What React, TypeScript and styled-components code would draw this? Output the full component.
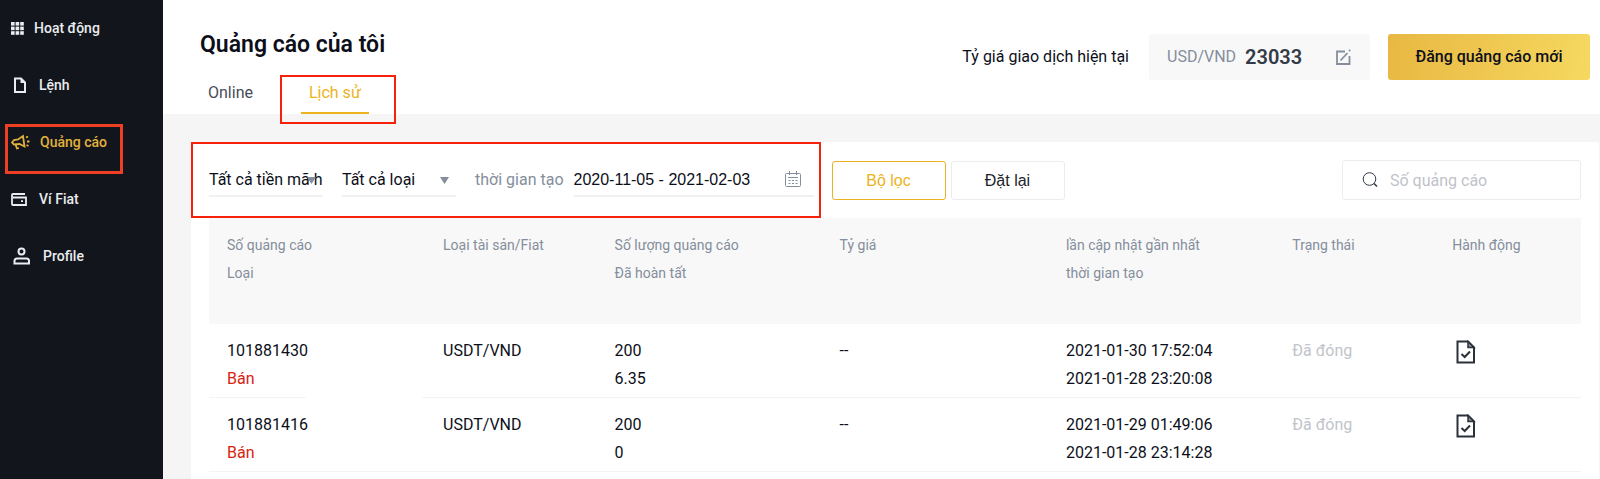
import React from "react";
import styled, { createGlobalStyle } from "styled-components";

const ink = "#12161c";
const muted = "#848e9c";
const gold = "#ecb320";
const mark = "#f7200c";

const GlobalStyle = createGlobalStyle`
  * { box-sizing: border-box; }
  body { margin: 0; background: #f5f5f6; color: #0c0f1a; font-family: Roboto, "Noto Sans", sans-serif; font-size: 16px; line-height: 28px; }
  button, input, select { font: inherit; color: inherit; margin: 0; }
  a { color: inherit; text-decoration: none; }
`;

const Page = styled.div`
  display: grid;
  grid-template-columns: 163px minmax(0, 1fr);
  min-height: 100vh;
`;

const Sidebar = styled.nav`
  background: ${ink};
  padding-top: 10px;
  display: flex;
  flex-direction: column;
  gap: 21px;
`;

const NavLink = styled.a<{ $active?: boolean; $gap: number }>`
  display: flex;
  align-items: center;
  gap: ${(p) => p.$gap}px;
  height: 36px;
  padding-left: 11px;
  font-size: 14px;
  font-weight: 500;
  color: ${(p) => (p.$active ? "#e0b13c" : "#eaecef")};
  position: relative;
  svg { flex: none; }
`;

const NavOutline = styled.span`
  position: absolute;
  left: 5px;
  top: 0;
  width: 118px;
  height: 50px;
  border: 3px solid #ee3e23;
`;

const Main = styled.main`
  min-width: 0;
  display: flex;
  flex-direction: column;
`;

const Header = styled.header`
  background: #fff;
  height: 114px;
  display: flex;
  justify-content: space-between;
  padding: 28px 10px 0 37px;
`;

const Title = styled.h1`
  margin: 0;
  padding-top: 1px;
  font-size: 23px;
  line-height: 32px;
  font-weight: 600;
`;

const Tabs = styled.div`
  display: flex;
  gap: 40px;
  margin-top: 13px;
`;

const Tab = styled.button<{ $active?: boolean }>`
  position: relative;
  height: 40px;
  padding: 0 8px;
  border: 0;
  border-bottom: 2px solid ${(p) => (p.$active ? gold : "transparent")};
  background: none;
  color: ${(p) => (p.$active ? gold : "#474d57")};
`;

const TabOutline = styled.span`
  position: absolute;
  left: -21px;
  top: 1px;
  width: 116px;
  height: 49px;
  border: 2px solid ${mark};
`;

const HeaderRight = styled.div`
  display: flex;
  align-items: center;
  height: 46px;
  margin-top: 6px;
`;

const RateBox = styled.div`
  display: flex;
  align-items: center;
  width: 221px;
  height: 46px;
  margin: 0 18px 0 20px;
  padding: 0 18px;
  border-radius: 3px;
  background: #f8f8f9;
  color: ${muted};
`;

const Rate = styled.strong`
  margin-left: 9px;
  font-size: 20px;
  font-weight: 600;
  color: #333b47;
`;

const IconButton = styled.button`
  display: flex;
  padding: 0;
  border: 0;
  background: none;
  cursor: pointer;
`;

const EditButton = styled(IconButton)`
  margin-left: auto;
`;

const PostButton = styled.button`
  width: 202px;
  height: 46px;
  padding: 0;
  border: 0;
  border-radius: 3px;
  background: linear-gradient(100deg, #e8b842, #f6d860);
  font-weight: 500;
`;

const Card = styled.section`
  flex: 1;
  margin: 28px 1px 0 28px;
  padding: 0 18px;
  background: #fff;
`;

const Filters = styled.form`
  position: relative;
  display: flex;
  align-items: center;
  height: 76px;
`;

const FilterOutline = styled.span`
  position: absolute;
  left: -18px;
  top: 0;
  width: 630px;
  height: 76px;
  border: 2px solid ${mark};
  pointer-events: none;
`;

const SelectWrap = styled.label`
  position: relative;
  width: 114px;
  height: 34px;
  margin-right: 19px;
  border-bottom: 2px solid #f0f1f2;
  svg { position: absolute; right: 7px; top: 14px; pointer-events: none; }
`;

const Select = styled.select`
  width: 100%;
  height: 34px;
  padding: 0;
  border: 0;
  background: none;
  appearance: none;
  overflow: hidden;
  text-overflow: clip;
`;

const DateField = styled.label`
  display: flex;
  align-items: center;
  color: ${muted};
`;

const DateBox = styled.span`
  display: flex;
  align-items: center;
  justify-content: space-between;
  width: 240px;
  height: 34px;
  margin-left: 10px;
  padding-right: 13px;
  border-bottom: 2px solid #f0f1f2;
`;

const DateInput = styled.input`
  width: 200px;
  padding: 2px 0 0;
  border: 0;
  background: none;
  font-family: "Liberation Sans", sans-serif;
  color: #0c0f1a;
`;

const FilterButton = styled.button<{ $primary?: boolean }>`
  width: 114px;
  height: 39px;
  padding: 2px 0 0;
  margin-left: ${(p) => (p.$primary ? 18 : 5)}px;
  border: 1px solid ${(p) => (p.$primary ? gold : "#eaecef")};
  border-radius: 3px;
  background: #fff;
  color: ${(p) => (p.$primary ? gold : "#1e2329")};
  font-family: "Liberation Sans", sans-serif;
`;

const Search = styled.label`
  display: flex;
  align-items: center;
  gap: 12px;
  width: 239px;
  height: 40px;
  margin-left: auto;
  padding: 0 19px;
  border: 1px solid #eaecef;
  border-radius: 3px;
  svg { flex: none; }
  input { width: 100%; min-width: 0; padding: 2px 0 0; border: 0; outline: 0; background: none; }
  input::placeholder { color: #bfc3c9; opacity: 1; }
`;

const Table = styled.table`
  width: 100%;
  table-layout: fixed;
  border-collapse: collapse;
`;

const HeadCell = styled.th`
  height: 106px;
  padding: 13px 0 0 18px;
  background: #f8f8f8;
  color: ${muted};
  font-size: 14px;
  font-weight: 400;
  text-align: left;
  vertical-align: top;
`;

const Cell = styled.td<{ $tone?: string; $line?: string }>`
  height: 74px;
  padding: 13px 0 0 18px;
  color: ${(p) => p.$tone || "inherit"};
  background: ${(p) => p.$line || "linear-gradient(#f2f3f4, #f2f3f4)"} bottom left / 100% 1px no-repeat;
  vertical-align: top;
`;

const ActionCell = styled(Cell)`
  padding: 16px 0 0 22px;
`;

const Line = styled.div<{ $tone?: string }>`
  color: ${(p) => p.$tone || "inherit"};
`;

const Col = styled.col<{ $w: number }>`
  width: ${(p) => p.$w}%;
`;

const GridIcon = () => (
  <svg width="13" height="13" viewBox="0 0 13 13" fill="currentColor">
    {[0, 4.6, 9.2].map((y) => [0, 4.6, 9.2].map((x) => <rect key={`${x}-${y}`} x={x} y={y} width="3.600" height="3.600" />))}
  </svg>
);

const FileIcon = () => (
  <svg width="18" height="16" viewBox="0 0 18 16" fill="none" stroke="currentColor" strokeWidth="2">
    <path d="M4 1.500h6l4 4V15H4z" />
    <path d="M9.500 1.500v4.500H14z" fill="currentColor" stroke="none" />
  </svg>
);

const HornIcon = () => (
  <svg width="19" height="16" viewBox="0 0 19 16" fill="none" stroke="currentColor" strokeWidth="1.800">
    <path d="M1 8.500l2-2.500 4-.5L12 2l1.500 10.500-5-2.500L3 10.500zM4.500 10.500l1.500 4 2-.5M15 3.500l2-1M16 7.500h2.500M15.500 11l2 1" />
  </svg>
);

const WalletIcon = () => (
  <svg width="16" height="13" viewBox="0 0 16 13" fill="none" stroke="currentColor" strokeWidth="1.800">
    <path d="M2 4.500h13v7.500H2a1 1 0 0 1-1-1V2a1 1 0 0 1 1-1h12M1 3.500l1 1" />
    <path d="M10 8.200h2" />
  </svg>
);

const UserIcon = () => (
  <svg width="21" height="18" viewBox="0 0 21 18" fill="none" stroke="currentColor" strokeWidth="2">
    <circle cx="10.500" cy="4.500" r="3" />
    <path d="M3.500 16.500v-2.500c0-1.500 1-2.500 2.500-2.500h9.500c1.500 0 2.500 1 2.500 2.500v2.500z" />
  </svg>
);

const EditIcon = () => (
  <svg width="17" height="18" viewBox="0 0 17 18" fill="none" stroke={muted} strokeWidth="1.800">
    <path d="M10 3.500H2v12.500h12.500V8M5.500 12.500l7-7.500M14 3l1.200-1.200" />
  </svg>
);

const Caret = () => (
  <svg width="9" height="7" viewBox="0 0 9 7" fill={muted}><path d="M0 0h9L4.500 7z" /></svg>
);

const CalendarIcon = () => (
  <svg width="16" height="17" viewBox="0 0 16 17" fill="none" stroke={muted}>
    <path d="M1.500 2.500h13a1 1 0 0 1 1 1v11a1 1 0 0 1-1 1h-13a1 1 0 0 1-1-1v-11a1 1 0 0 1 1-1zM4.500 0v4M11.500 0v4M3 6.500h10" />
    <path d="M3.500 9.500h9.500M3.500 12.500h9.500" strokeDasharray="2 1.500" />
  </svg>
);

const SearchIcon = () => (
  <svg width="16" height="16" viewBox="0 0 16 16" fill="none" stroke="#333b47">
    <circle cx="7.500" cy="7" r="6.300" /><path d="M12 11.500l3 3" strokeWidth="1.600" />
  </svg>
);

const DetailIcon = () => (
  <svg width="20" height="24" viewBox="0 0 20 24" fill="none" stroke="#2b3139" strokeWidth="2">
    <path d="M1.500 1.500h10.500l6 6v15H1.500z" />
    <path d="M12 1.500v6h6z" fill="#8b9098" strokeWidth="1.500" />
    <path d="M5.500 14l3.200 3 5.300-5.500" />
  </svg>
);

const nav = [
  { label: "Hoạt động", icon: <GridIcon />, gap: 10 },
  { label: "Lệnh", icon: <FileIcon />, gap: 10 },
  { label: "Quảng cáo", icon: <HornIcon />, gap: 10, active: true },
  { label: "Ví Fiat", icon: <WalletIcon />, gap: 12 },
  { label: "Profile", icon: <UserIcon />, gap: 11 },
];

const widths = [15.75, 12.5, 16.4, 16.5, 16.5, 11.65, 10.7];

const heads = [
  ["Số quảng cáo", "Loại"],
  ["Loại tài sản/Fiat"],
  ["Số lượng quảng cáo", "Đã hoàn tất"],
  ["Tỷ giá"],
  ["lần cập nhật gần nhất", "thời gian tạo"],
  ["Trạng thái"],
  ["Hành động"],
];

const ads = [
  { id: "101881430", done: "6.35", updated: "2021-01-30 17:52:04", created: "2021-01-28 23:20:08",
    line: "linear-gradient(90deg, #f2f3f4 97px, transparent 97px calc(100% - 3px), #f2f3f4 0)" },
  { id: "101881416", done: "0", updated: "2021-01-29 01:49:06", created: "2021-01-28 23:14:28" },
];

export default function App() {
  return (
    <Page>
      <GlobalStyle />
      <Sidebar>
        {nav.map((n) => (
          <NavLink key={n.label} href="#" $active={n.active} $gap={n.gap}>
            {n.icon}
            {n.label}
            {n.active && <NavOutline />}
          </NavLink>
        ))}
      </Sidebar>
      <Main>
        <Header>
          <div>
            <Title>Quảng cáo của tôi</Title>
            <Tabs>
              <Tab>Online</Tab>
              <Tab $active>Lịch sử<TabOutline /></Tab>
            </Tabs>
          </div>
          <HeaderRight>
            <span>Tỷ giá giao dịch hiện tại</span>
            <RateBox>
              USD/VND<Rate>23033</Rate>
              <EditButton aria-label="Sửa tỷ giá"><EditIcon /></EditButton>
            </RateBox>
            <PostButton>Đăng quảng cáo mới</PostButton>
          </HeaderRight>
        </Header>
        <Card>
          <Filters onSubmit={(e) => e.preventDefault()}>
            <SelectWrap>
              <Select aria-label="Tiền mã hóa"><option>Tất cả tiền mã hóa</option></Select>
              <Caret />
            </SelectWrap>
            <SelectWrap>
              <Select aria-label="Loại"><option>Tất cả loại</option></Select>
              <Caret />
            </SelectWrap>
            <DateField>
              thời gian tạo
              <DateBox>
                <DateInput defaultValue="2020-11-05 - 2021-02-03" />
                <CalendarIcon />
              </DateBox>
            </DateField>
            <FilterButton type="submit" $primary>Bộ lọc</FilterButton>
            <FilterButton type="reset">Đặt lại</FilterButton>
            <Search>
              <SearchIcon />
              <input placeholder="Số quảng cáo" aria-label="Số quảng cáo" />
            </Search>
            <FilterOutline />
          </Filters>
          <Table>
            <colgroup>{widths.map((w, i) => <Col key={i} $w={w} />)}</colgroup>
            <thead>
              <tr>
                {heads.map((lines) => (
                  <HeadCell key={lines[0]} scope="col">
                    {lines.map((l) => <Line key={l}>{l}</Line>)}
                  </HeadCell>
                ))}
              </tr>
            </thead>
            <tbody>
              {ads.map((a) => (
                <tr key={a.id}>
                  <Cell $line={a.line}><Line>{a.id}</Line><Line $tone="#d9230f">Bán</Line></Cell>
                  <Cell>USDT/VND</Cell>
                  <Cell><Line>200</Line><Line>{a.done}</Line></Cell>
                  <Cell>--</Cell>
                  <Cell><Line>{a.updated}</Line><Line>{a.created}</Line></Cell>
                  <Cell $tone="#c1c4ca">Đã đóng</Cell>
                  <ActionCell><IconButton aria-label="Chi tiết"><DetailIcon /></IconButton></ActionCell>
                </tr>
              ))}
            </tbody>
          </Table>
        </Card>
      </Main>
    </Page>
  );
}
